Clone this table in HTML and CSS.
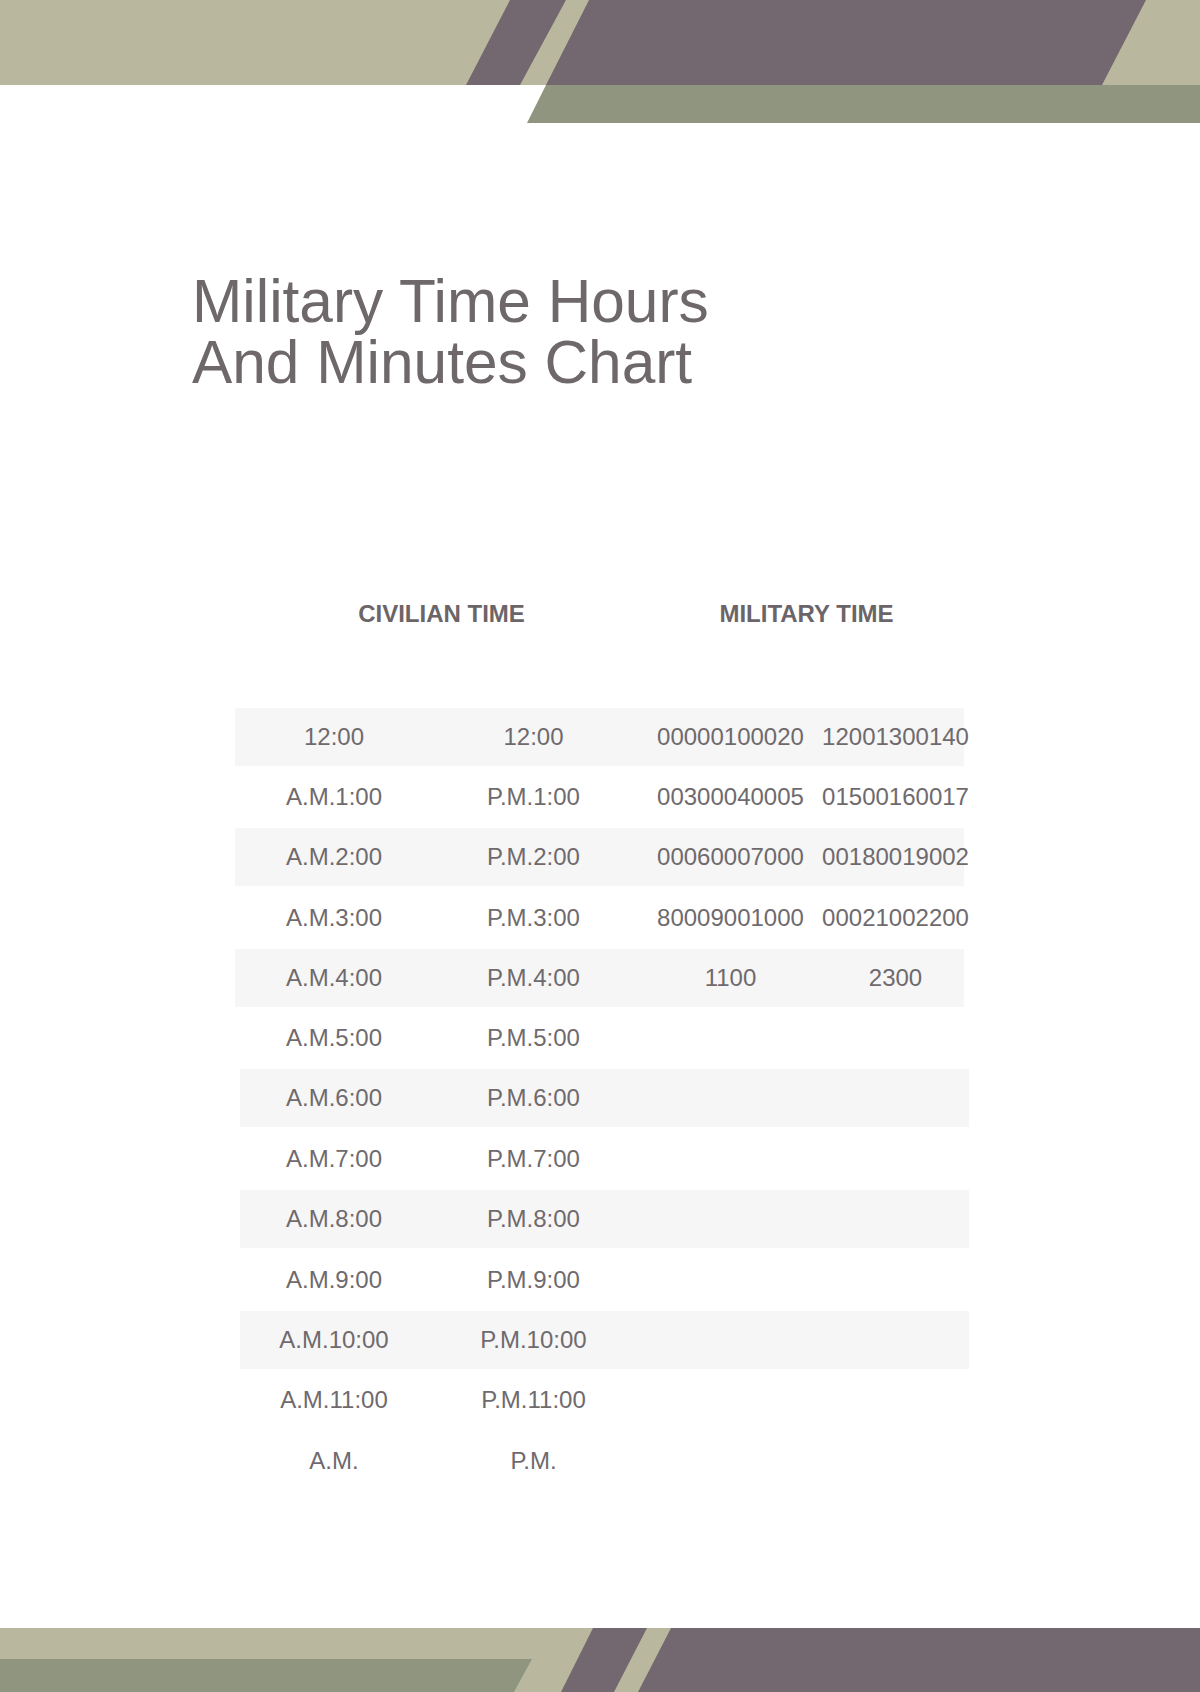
FILE: index.html
```html
<!DOCTYPE html>
<html lang="en">
<head>
<meta charset="utf-8">
<title>Military Time Hours And Minutes Chart</title>
<link rel="stylesheet" href="styles.css">
</head>
<body>
<div class="page">
  <svg class="deco-top" viewBox="0 0 1200 123" width="1200" height="123" aria-hidden="true">
    <rect x="0" y="0" width="1200" height="85" fill="#b9b89f"/>
    <polygon points="510,0 566,0 520,85 466,85" fill="#736870"/>
    <polygon points="589,0 1146,0 1102,85 546,85" fill="#736870"/>
    <polygon points="546,85 1200,85 1200,123 527,123" fill="#8f957e"/>
  </svg>

  <h1 class="title">Military Time Hours<br>And Minutes Chart</h1>

  <div class="heads">
    <div class="head">CIVILIAN TIME</div>
    <div class="head">MILITARY TIME</div>
  </div>

  <div class="tbl tbl-a">
    <div class="row shade"><div class="cell">12:00</div><div class="cell">12:00</div><div class="cell">00000100020</div><div class="cell">12001300140</div></div>
    <div class="row"><div class="cell">A.M.1:00</div><div class="cell">P.M.1:00</div><div class="cell">00300040005</div><div class="cell">01500160017</div></div>
    <div class="row shade"><div class="cell">A.M.2:00</div><div class="cell">P.M.2:00</div><div class="cell">00060007000</div><div class="cell">00180019002</div></div>
    <div class="row"><div class="cell">A.M.3:00</div><div class="cell">P.M.3:00</div><div class="cell">80009001000</div><div class="cell">00021002200</div></div>
    <div class="row shade"><div class="cell">A.M.4:00</div><div class="cell">P.M.4:00</div><div class="cell">1100</div><div class="cell">2300</div></div>
  </div>

  <div class="tbl tbl-b">
    <div class="row"><div class="cell">A.M.5:00</div><div class="cell">P.M.5:00</div><div class="cell"></div></div>
    <div class="row shade"><div class="cell">A.M.6:00</div><div class="cell">P.M.6:00</div><div class="cell"></div></div>
    <div class="row"><div class="cell">A.M.7:00</div><div class="cell">P.M.7:00</div><div class="cell"></div></div>
    <div class="row shade"><div class="cell">A.M.8:00</div><div class="cell">P.M.8:00</div><div class="cell"></div></div>
    <div class="row"><div class="cell">A.M.9:00</div><div class="cell">P.M.9:00</div><div class="cell"></div></div>
    <div class="row shade"><div class="cell">A.M.10:00</div><div class="cell">P.M.10:00</div><div class="cell"></div></div>
    <div class="row"><div class="cell">A.M.11:00</div><div class="cell">P.M.11:00</div><div class="cell"></div></div>
    <div class="row"><div class="cell">A.M.</div><div class="cell">P.M.</div><div class="cell"></div></div>
  </div>

  <svg class="deco-bottom" viewBox="0 0 1200 64" width="1200" height="64" aria-hidden="true">
    <rect x="0" y="0" width="1200" height="64" fill="#b9b89f"/>
    <polygon points="0,31 532,31 514,64 0,64" fill="#8f957e"/>
    <polygon points="593,0 647,0 614,64 561,64" fill="#736870"/>
    <polygon points="671,0 1200,0 1200,64 638,64" fill="#736870"/>
  </svg>
</div>
</body>
</html>
```

FILE: styles.css
```css
html, body {
  margin: 0;
  padding: 0;
  background: #ffffff;
}

.page {
  width: 1200px;
  height: 1692px;
  display: flex;
  flex-direction: column;
  overflow: hidden;
  font-family: "Liberation Sans", Arial, sans-serif;
  color: #6f6a6d;
}

.deco-top,
.deco-bottom {
  display: block;
  flex: none;
}

.deco-bottom {
  margin-top: auto;
}

.title {
  margin: 148px 0 0 192px;
  font-size: 60.4px;
  line-height: 61px;
  font-weight: 400;
  color: #6e686b;
}

.heads {
  margin: 207px 0 0 235px;
  display: grid;
  grid-template-columns: 413px 317px;
}

.head {
  font-size: 24px;
  line-height: 28px;
  font-weight: 700;
  text-align: center;
  color: #6b6568;
  white-space: nowrap;
}

.tbl {
  width: 729px;
  display: flex;
  flex-direction: column;
  gap: 2.2px;
}

.tbl-a {
  margin: 80px 0 0 235px;
}

.tbl-b {
  margin: 2.2px 0 0 240px;
  gap: 2.4px;
}

.row {
  display: grid;
  height: 58px;
  flex: none;
}

.tbl-a .row {
  grid-template-columns: 198px 201px 193px 137px;
}

.tbl-b .row {
  grid-template-columns: 188px 211px 330px;
}

.row.shade {
  background: #f6f6f6;
}

.cell {
  display: flex;
  align-items: center;
  justify-content: center;
  font-size: 24px;
  white-space: nowrap;
  min-width: 0;
}
```
